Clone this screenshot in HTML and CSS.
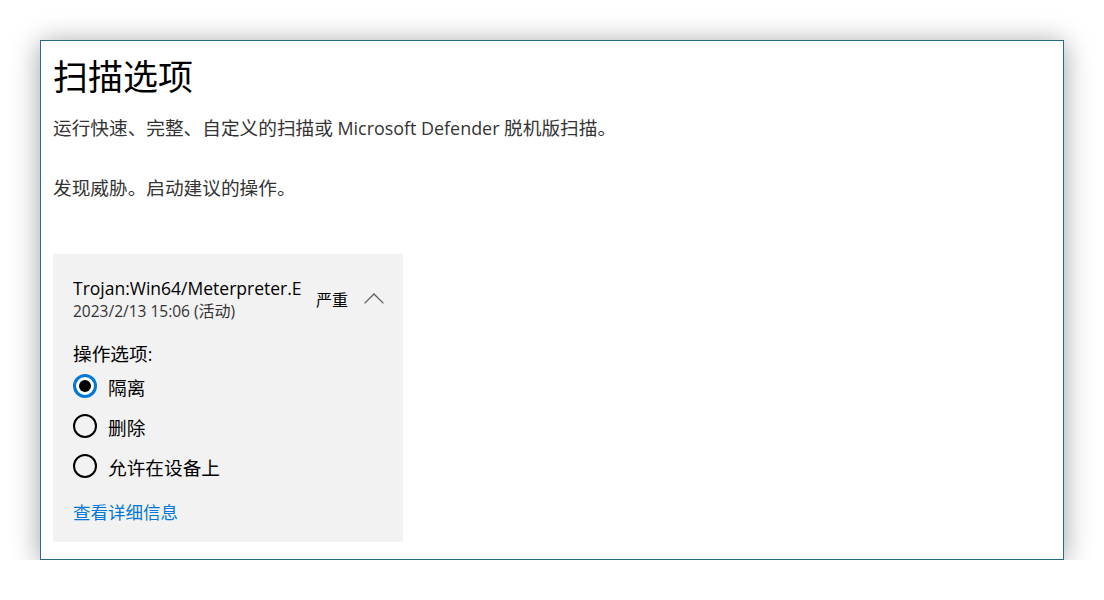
FILE: index.html
```html
<!DOCTYPE html>
<html lang="zh-CN">
<head>
<meta charset="utf-8">
<title>扫描选项</title>
<link rel="stylesheet" href="styles.css">
</head>
<body>
<div class="window">
  <h1 class="title">扫描选项</h1>
  <p class="desc">运行快速、完整、自定义的扫描或<span class="latin-md"> Microsoft Defender </span>脱机版扫描。</p>
  <p class="desc status">发现威胁。启动建议的操作。</p>
  <div class="card">
    <div class="card-head">
      <div class="threat">
        <div class="threat-name"><span class="latin">Trojan:Win64/Meterpreter.E</span></div>
        <div class="threat-date"><span class="latin-sm">2023/2/13 15:06 (</span>活动<span class="latin-sm">)</span></div>
      </div>
      <div class="severity">严重</div>
      <svg class="chevron" width="20" height="11" viewBox="0 0 20 11" aria-hidden="true">
        <path d="M0.6 10.4 L10 1 L19.4 10.4" fill="none" stroke="#5c5c5c" stroke-width="1.3"/>
      </svg>
    </div>
    <div class="label">操作选项<span class="latin">:</span></div>
    <div class="radios">
      <label class="radio"><span class="dot checked"></span><span>隔离</span></label>
      <label class="radio"><span class="dot"></span><span>删除</span></label>
      <label class="radio"><span class="dot"></span><span>允许在设备上</span></label>
    </div>
    <a class="link" href="#">查看详细信息</a>
  </div>
</div>
</body>
</html>
```
FILE: styles.css
```css
html, body {
  margin: 0;
  padding: 0;
  background: #ffffff;
}
body {
  font-family: "Open Sans", "Noto Sans CJK SC", sans-serif;
  padding: 40px 0 0 40px;
}
.window {
  border: 1px solid #266d7d;
  background: #ffffff;
  box-shadow: 0 3px 26px rgba(0, 0, 0, 0.38);
  padding: 12px 0 0 12px;
  box-sizing: content-box;
  width: 1010px;
  height: 506px;
}
.latin {
  font-size: 17.5px;
}
.latin-md {
  font-size: 17.9px;
}
.latin-sm {
  font-size: 15.5px;
}
.title {
  margin: 0;
  font-size: 35px;
  line-height: 48px;
  font-weight: 400;
  color: #000;
}
.desc {
  margin: 15px 0 0;
  font-size: 18.67px;
  line-height: 24px;
  color: #333;
}
.desc.status {
  margin-top: 36px;
}
.card {
  margin-top: 54px;
  width: 350px;
  box-sizing: border-box;
  background: #f2f2f2;
  padding: 22px 19px 18px 20px;
}
.card-head {
  display: flex;
  align-items: center;
}
.threat {
  flex: 1;
  min-width: 0;
}
.threat-name {
  font-size: 18.67px;
  line-height: 24px;
  color: #000;
  white-space: nowrap;
  overflow: hidden;
}
.threat-date {
  margin-top: 1px;
  font-size: 16px;
  line-height: 20px;
  color: #333;
  white-space: nowrap;
}
.severity {
  font-size: 16px;
  color: #000;
  margin-left: 14px;
}
.chevron {
  margin-left: 16px;
  display: block;
}
.label {
  margin-top: 21px;
  font-size: 18.67px;
  line-height: 24px;
  color: #000;
}
.radios {
  display: flex;
  flex-direction: column;
}
.radio {
  display: flex;
  align-items: center;
  height: 40px;
  font-size: 18.67px;
  color: #000;
}
.dot {
  width: 24px;
  height: 24px;
  box-sizing: border-box;
  border: 2px solid #000;
  border-radius: 50%;
  margin-right: 11px;
  display: flex;
  align-items: center;
  justify-content: center;
}
.dot.checked {
  border: 3px solid #0078d7;
  background: #fff;
}
.dot.checked::after {
  content: "";
  width: 12px;
  height: 12px;
  border-radius: 50%;
  background: #000;
}
.link {
  display: block;
  margin-top: 14px;
  font-size: 17.5px;
  line-height: 24px;
  color: #0078d7;
  text-decoration: none;
}
```
